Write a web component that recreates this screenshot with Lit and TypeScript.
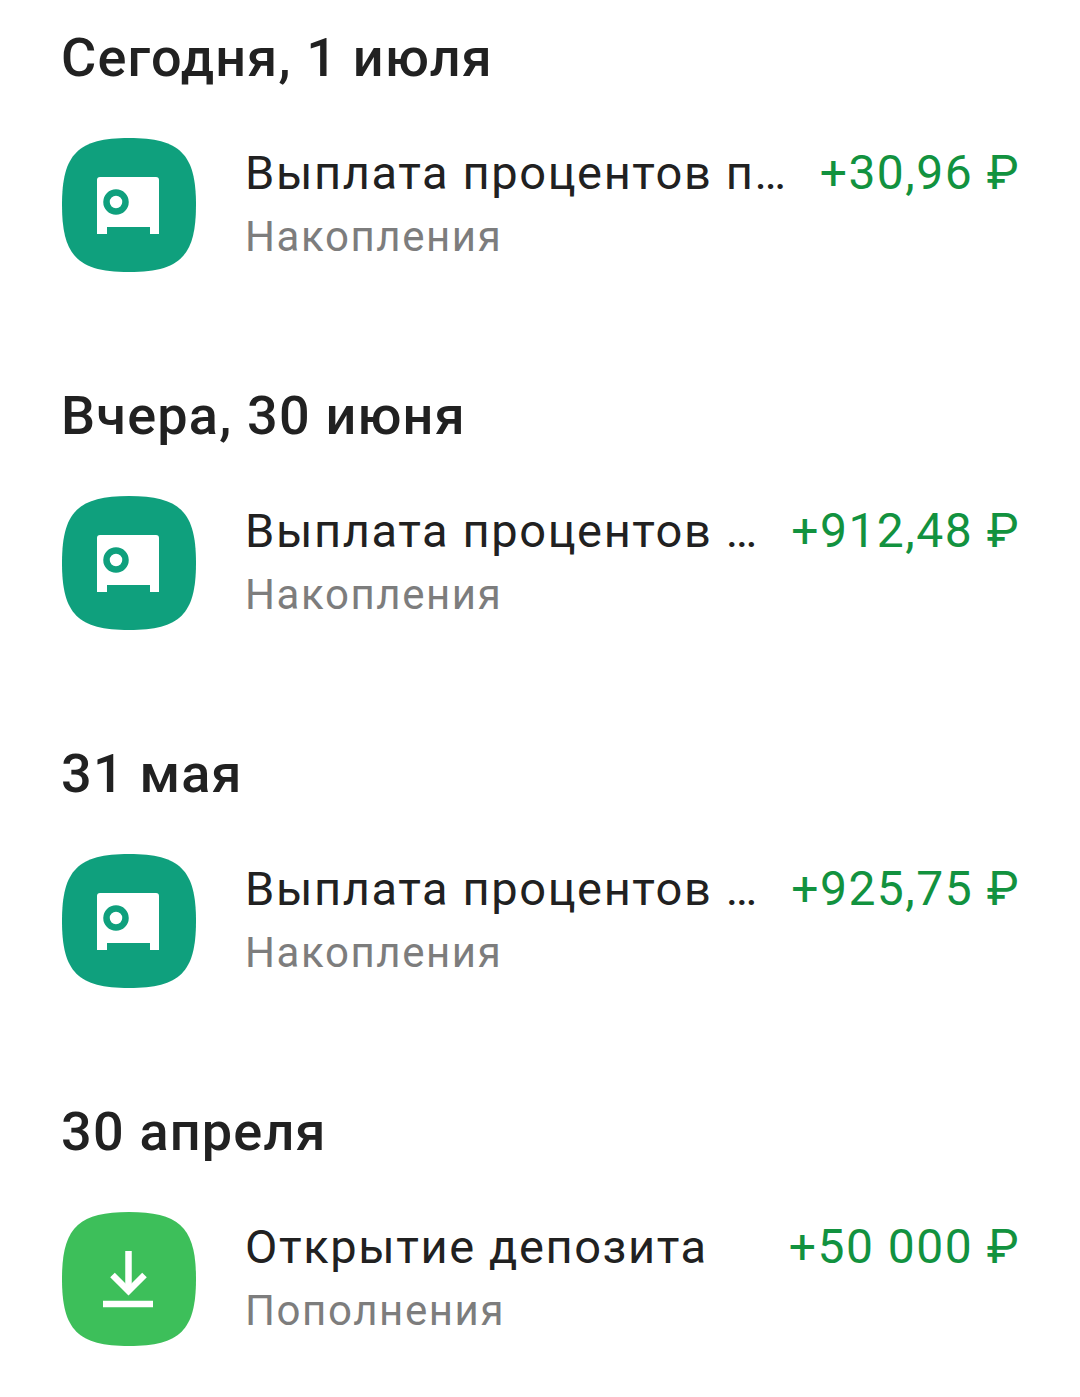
import {customElement} from "lit/decorators.js";
import {css, html, LitElement, svg} from "lit";

const SQUIRCLE = "M67 0C118 0 134 16 134 67C134 118 118 134 67 134C16 134 0 118 0 67C0 16 16 0 67 0Z";

const safeIcon = svg`
    <path fill="#0fa07d" d=${SQUIRCLE}></path>
    <path fill="#fff" d="M38 39H94Q97 39 97 42V96H88V89H45V96H35V42Q35 39 38 39Z"></path>
    <circle cx="54" cy="64" r="9.5" fill="#fff" stroke="#0fa07d" stroke-width="6.5"></circle>
`;

const depositIcon = svg`
    <path fill="#3dbf5a" d=${SQUIRCLE}></path>
    <g fill="none" stroke="#fff" stroke-width="6.5">
        <path d="M66.5 39V80"></path>
        <path d="M50.5 63L66.5 79L82.5 63"></path>
        <path d="M41 92H91"></path>
    </g>
`;

const ITEMS = [
    {date: "Сегодня, 1 июля", title: "Выплата процентов п…", sub: "Накопления", amount: "+30,96 ₽", icon: safeIcon},
    {date: "Вчера, 30 июня", title: "Выплата процентов …", sub: "Накопления", amount: "+912,48 ₽", icon: safeIcon},
    {date: "31 мая", title: "Выплата процентов …", sub: "Накопления", amount: "+925,75 ₽", icon: safeIcon},
    {date: "30 апреля", title: "Открытие депозита", sub: "Пополнения", amount: "+50 000 ₽", icon: depositIcon},
];

@customElement("app-root")
export class AppRoot extends LitElement {
    static override styles = css`
        :host {
            display: block;
            height: 1397px;
            overflow: hidden;
            background: #fff;
            font-family: Roboto, "Noto Sans", sans-serif;
        }

        .list {
            display: flex;
            flex-direction: column;
            row-gap: 114px;
            padding: 28px 60px 0 62px;
        }

        .date {
            height: 60px;
            margin: 0 0 50px -1px;
            font-size: 54px;
            line-height: 60px;
            font-weight: 500;
            letter-spacing: 1.2px;
            color: #212121;
        }

        .row {
            display: flex;
            align-items: flex-start;
            column-gap: 49px;
            height: 134px;
        }

        .icon {
            flex: none;
            width: 134px;
            height: 134px;
        }

        .text {
            flex: 1;
            min-width: 0;
            padding-top: 7px;
        }

        .title,
        .amount {
            line-height: 56px;
            white-space: nowrap;
        }

        .title {
            font-size: 47px;
            letter-spacing: 1.6px;
            color: #212121;
        }

        .sub {
            margin-top: 11px;
            font-size: 42px;
            line-height: 50px;
            letter-spacing: 1.6px;
            color: #7d7d7d;
        }

        .amount {
            flex: none;
            padding-top: 7px;
            font-size: 48px;
            letter-spacing: 1.5px;
            color: #12923f;
        }
    `;

    override render() {
        return html`
            <div class="list">
                ${ITEMS.map(item => html`
                    <section>
                        <div class="date">${item.date}</div>
                        <div class="row">
                            <svg class="icon" viewBox="0 0 134 134">${item.icon}</svg>
                            <div class="text">
                                <div class="title">${item.title}</div>
                                <div class="sub">${item.sub}</div>
                            </div>
                            <div class="amount">${item.amount}</div>
                        </div>
                    </section>
                `)}
            </div>
        `;
    }
}
